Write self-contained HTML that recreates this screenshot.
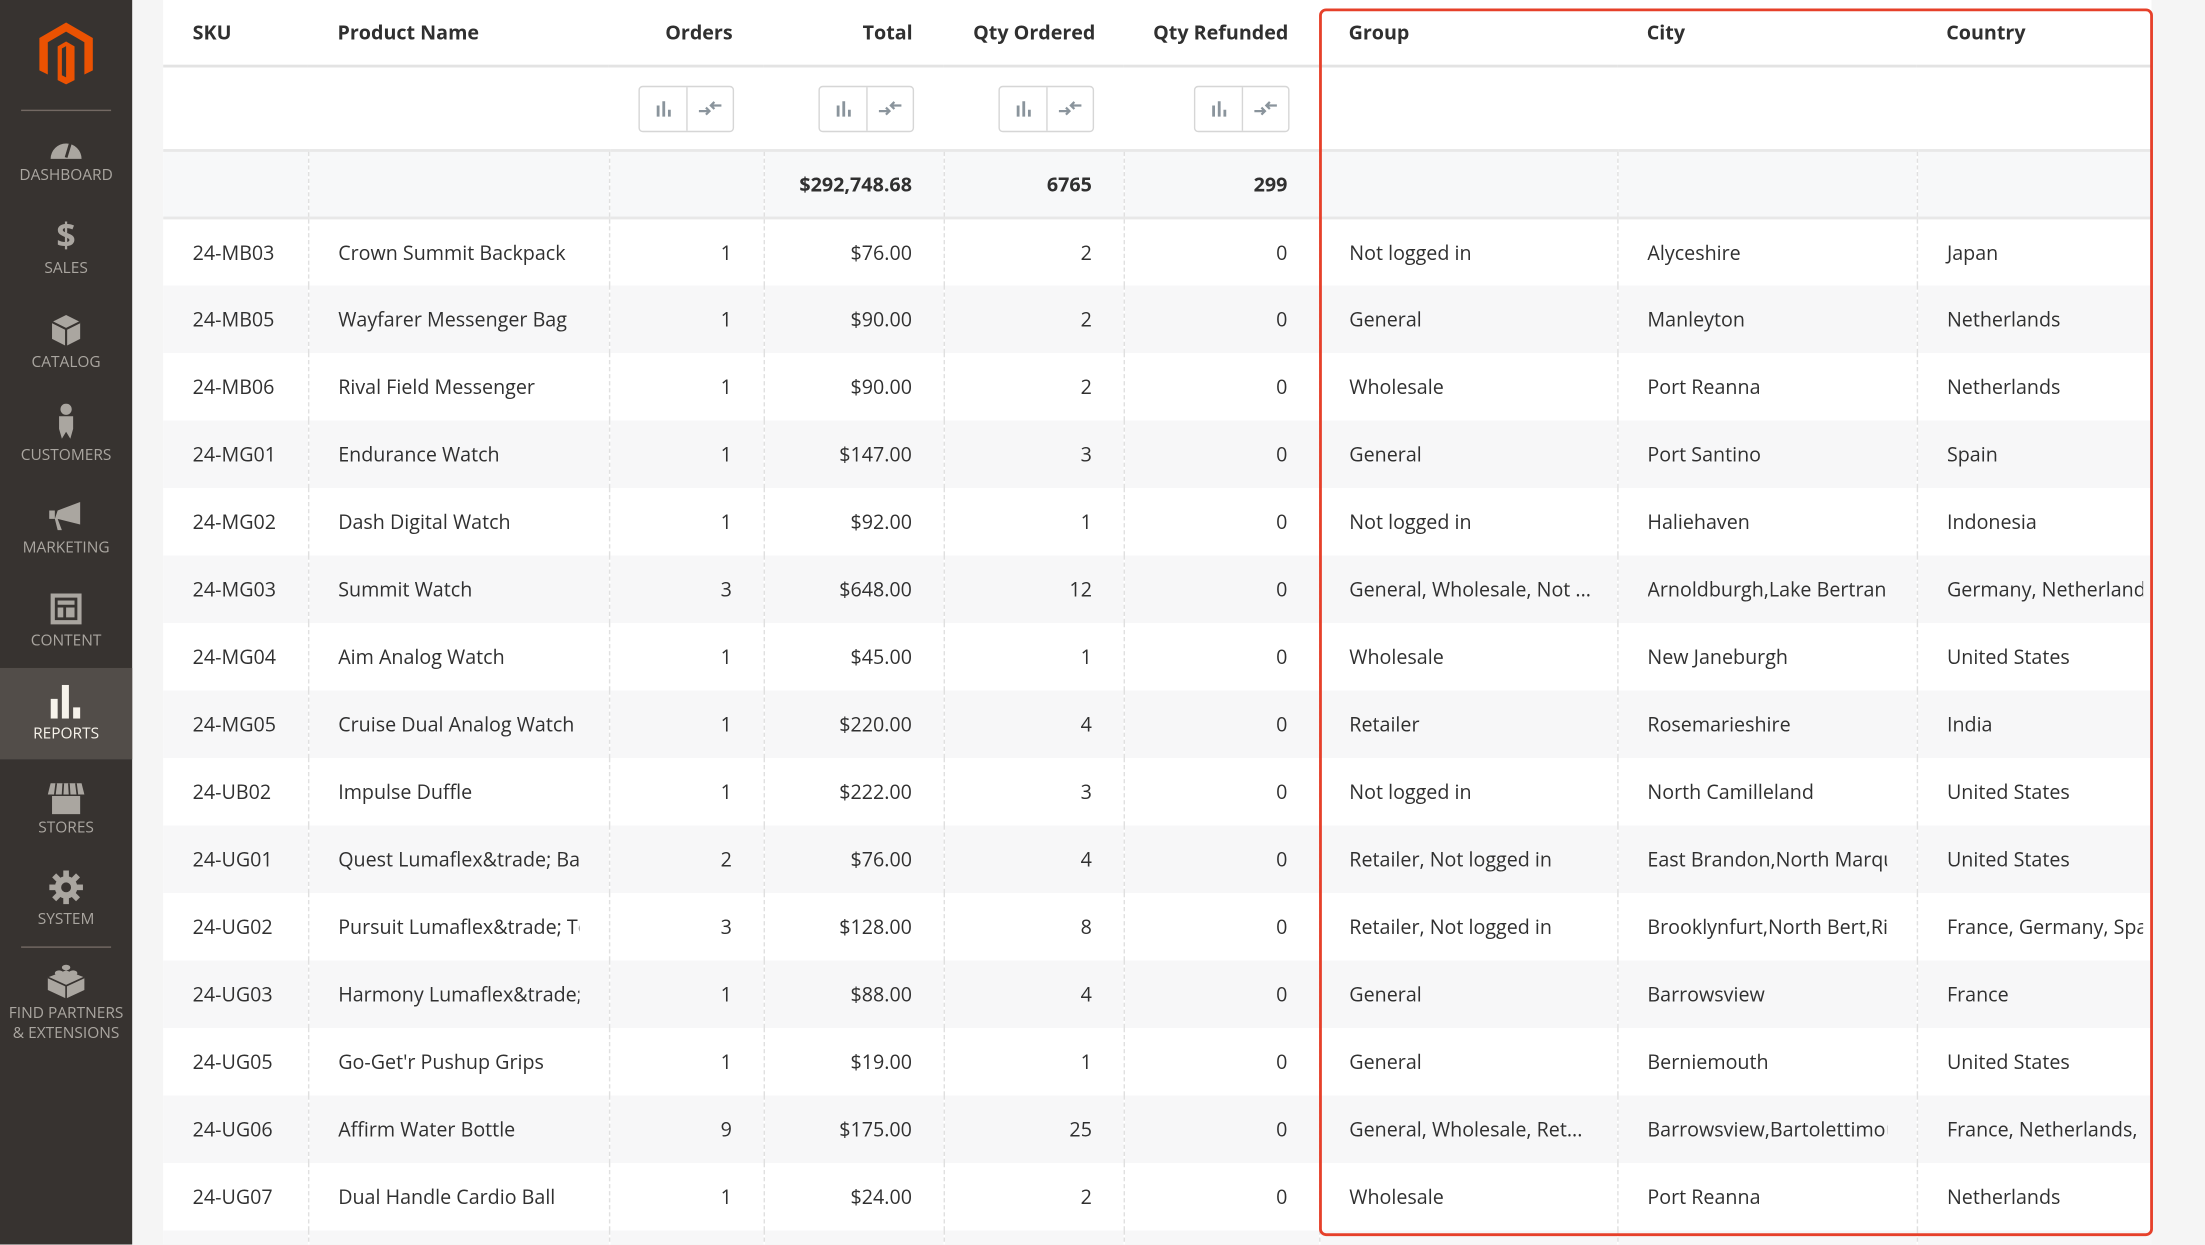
<!DOCTYPE html>
<html><head><meta charset="utf-8">
<style>
*{margin:0;padding:0;box-sizing:border-box}
html,body{width:2205px;height:1245px;overflow:hidden;background:#f5f5f5}
#w{position:absolute;left:0;top:0;width:1568px;height:885px;overflow:hidden;transform:scale(1.40625);transform-origin:0 0;font-family:"Open Sans","Liberation Sans",sans-serif;color:#303030}
#sb{position:absolute;left:0;top:0;width:94px;height:885px;background:#373330}
.it{position:absolute;left:0;width:94px;text-align:center;color:#aaa6a0;font-size:11px;line-height:14px}
.it svg{display:block;margin:0 auto}
.hr{position:absolute;left:15px;width:64px;height:1px;background:#736963}
#main{position:absolute;left:116px;top:0;width:1414px;height:885px;background:#fff;overflow:hidden}
table{border-collapse:collapse;table-layout:fixed;width:1414px;font-size:14px}
td,th{white-space:nowrap;overflow:hidden;padding:0 21px}
td .c{overflow:hidden;white-space:nowrap}
th{height:47px;font-weight:bold;text-align:left;border-bottom:2px solid #e3e3e3;padding-bottom:0}
.r{text-align:right;padding-right:22px}
tr.f td{height:60px;border-bottom:2px solid #e8e8e8}
tr.t td{height:48px;background:#f7f8f9;font-weight:bold;border-bottom:2px solid #e8e8e8;border-left:1px dashed #e0e0e0}
tr.t td:first-child{border-left:none}
tbody tr.d td{height:48px;border-left:1px dashed #e0e0e0;padding-top:1px}
tbody tr.d td:first-child{border-left:none}
tbody tr.d:nth-child(even) td{background:#f7f7f8}
.bp{display:inline-flex;border:1px solid #d6d6d6;border-radius:3px;height:33px;vertical-align:middle}
.bp span{width:33px;display:flex;align-items:center;justify-content:center}
.bp span+span{border-left:1px solid #d6d6d6}
#red{position:absolute;left:938px;top:6px;width:593px;height:873px;border:2px solid #e6402a;border-radius:5px}
</style></head><body><div id="w">
<div id="sb">
 <div class="it" style="top:15px"><svg width="40" height="46" viewBox="0 0 40 46"><path d="M20 1L39 12V35L33 38V15L20 7.5L7 15V38L1 35V12Z M14 18L20 14.5L26 18V42L20 45L14 42Z" fill="#eb5202"/><path d="M17 19.5L20 17.8V40L17 38.5Z" fill="#373330"/></svg></div>
 <div class="hr" style="top:78px"></div>
 <div class="it" style="top:96px"><svg width="24" height="18" viewBox="0 0 24 18"><path d="M1 17A11 11 0 0 1 23 17Z" fill="#aaa6a0"/><path d="M12 16L15 6" stroke="#373330" stroke-width="2"/></svg><div style="margin-top:4px">DASHBOARD</div></div>
 <div class="it" style="top:156px"><div style="font-size:24px;font-weight:bold;line-height:24px">$</div><div style="margin-top:4px">SALES</div></div>
 <div class="it" style="top:223px"><svg width="22" height="24" viewBox="0 0 22 24"><path d="M11 1L21 6V18L11 23L1 18V6Z" fill="#aaa6a0"/><path d="M1 6L11 11L21 6M11 11V23" stroke="#373330" stroke-width="1.5" fill="none"/></svg><div style="margin-top:4px">CATALOG</div></div>
 <div class="it" style="top:287px"><svg width="14" height="26" viewBox="0 0 14 26"><circle cx="7" cy="4" r="4" fill="#aaa6a0"/><path d="M2 9H12V18L10 25L7 20L4 25L2 18Z" fill="#aaa6a0"/></svg><div style="margin-top:4px">CUSTOMERS</div></div>
 <div class="it" style="top:357px"><svg width="32" height="22" viewBox="0 0 32 22"><path d="M4 6H8V12H4Z M10 6L26 0V16L10 12L13 20H10L8 12Z" fill="#aaa6a0"/></svg><div style="margin-top:4px">MARKETING</div></div>
 <div class="it" style="top:421px"><svg width="24" height="24" viewBox="0 0 24 24"><path d="M1 1H23V23H1Z M4 4V20H20V4Z M6 6H18V9H6Z M6 11H10V18H6Z M12 11H18V18H12Z" fill="#aaa6a0" fill-rule="evenodd"/></svg><div style="margin-top:4px">CONTENT</div></div>
 <div style="position:absolute;left:0;top:475px;width:94px;height:65px;background:#524d49"></div>
 <div class="it" style="top:487px;color:#f7f3eb"><svg width="22" height="24" viewBox="0 0 22 24"><path d="M0 10H5V24H0Z M8 0H13V24H8Z M16 16H21V24H16Z" fill="#f7f3eb"/></svg><div style="margin-top:4px">REPORTS</div></div>
 <div class="it" style="top:555px"><svg width="28" height="24" viewBox="0 0 28 24"><path d="M3 2H25L27 10H1Z" fill="#aaa6a0"/><path d="M4 11H24V24H4Z" fill="#aaa6a0"/><path d="M7 2L6 10M12 2L11.5 10M16 2L16.5 10M21 2L22 10" stroke="#373330" stroke-width="1.2"/></svg><div style="margin-top:3px">STORES</div></div>
 <div class="it" style="top:619px"><svg width="24" height="24" viewBox="0 0 24 24"><g fill="#aaa6a0"><circle cx="12" cy="12" r="8"/><rect x="10" y="0" width="4" height="24"/><rect x="0" y="10" width="24" height="4"/><rect x="10" y="0" width="4" height="24" transform="rotate(45 12 12)"/><rect x="10" y="0" width="4" height="24" transform="rotate(-45 12 12)"/></g><circle cx="12" cy="12" r="3.5" fill="#373330"/></svg><div style="margin-top:4px">SYSTEM</div></div>
 <div class="hr" style="top:673px"></div>
 <div class="it" style="top:684px"><svg width="28" height="26" viewBox="0 0 28 26"><path d="M14 6L27 11V20L14 26L1 20V11Z" fill="#aaa6a0"/><ellipse cx="9" cy="8" rx="3" ry="2" fill="#aaa6a0"/><ellipse cx="19" cy="8" rx="3" ry="2" fill="#aaa6a0"/><ellipse cx="14" cy="4" rx="3" ry="2" fill="#aaa6a0"/><path d="M1 11L14 17L27 11M14 17V26" stroke="#373330" stroke-width="1.2" fill="none"/></svg><div style="margin-top:4px">FIND PARTNERS<br>&amp; EXTENSIONS</div></div>
</div>
<div id="main">
<table>
<colgroup><col style="width:103px"><col style="width:214px"><col style="width:110px"><col style="width:128px"><col style="width:128px"><col style="width:139px"><col style="width:212px"><col style="width:213px"><col style="width:167px"></colgroup>
<thead><tr><th>SKU</th><th>Product Name</th><th class="r">Orders</th><th class="r">Total</th><th class="r">Qty Ordered</th><th class="r">Qty Refunded</th><th>Group</th><th>City</th><th>Country</th></tr></thead>
<tbody>
<tr class="f"><td></td><td></td>
<td class="r" style="padding-right:21px"><span class="bp"><span><svg width="12" height="12"><path d="M1 4h2v8H1zM5 1h2v11H5zM9 7h2v5H9z" fill="#8a949c"/></svg></span><span><svg width="18" height="12"><path d="M1 8h7M6 5.5L8.5 8L6 10.5M17 4h-7M12 1.5L9.5 4L12 6.5" stroke="#8a949c" stroke-width="1.6" fill="none"/></svg></span></span></td>
<td class="r" style="padding-right:21px"><span class="bp"><span><svg width="12" height="12"><path d="M1 4h2v8H1zM5 1h2v11H5zM9 7h2v5H9z" fill="#8a949c"/></svg></span><span><svg width="18" height="12"><path d="M1 8h7M6 5.5L8.5 8L6 10.5M17 4h-7M12 1.5L9.5 4L12 6.5" stroke="#8a949c" stroke-width="1.6" fill="none"/></svg></span></span></td>
<td class="r" style="padding-right:21px"><span class="bp"><span><svg width="12" height="12"><path d="M1 4h2v8H1zM5 1h2v11H5zM9 7h2v5H9z" fill="#8a949c"/></svg></span><span><svg width="18" height="12"><path d="M1 8h7M6 5.5L8.5 8L6 10.5M17 4h-7M12 1.5L9.5 4L12 6.5" stroke="#8a949c" stroke-width="1.6" fill="none"/></svg></span></span></td>
<td class="r" style="padding-right:21px"><span class="bp"><span><svg width="12" height="12"><path d="M1 4h2v8H1zM5 1h2v11H5zM9 7h2v5H9z" fill="#8a949c"/></svg></span><span><svg width="18" height="12"><path d="M1 8h7M6 5.5L8.5 8L6 10.5M17 4h-7M12 1.5L9.5 4L12 6.5" stroke="#8a949c" stroke-width="1.6" fill="none"/></svg></span></span></td>
<td></td><td></td><td></td></tr>
<tr class="t"><td></td><td></td><td></td><td class="r">$292,748.68</td><td class="r">6765</td><td class="r">299</td><td></td><td></td><td></td></tr>
<tr class="d"><td>24-MB03</td><td>Crown Summit Backpack</td><td class="r">1</td><td class="r">$76.00</td><td class="r">2</td><td class="r">0</td><td>Not logged in</td><td>Alyceshire</td><td>Japan</td></tr>
<tr class="d"><td>24-MB05</td><td>Wayfarer Messenger Bag</td><td class="r">1</td><td class="r">$90.00</td><td class="r">2</td><td class="r">0</td><td>General</td><td>Manleyton</td><td>Netherlands</td></tr>
<tr class="d"><td>24-MB06</td><td>Rival Field Messenger</td><td class="r">1</td><td class="r">$90.00</td><td class="r">2</td><td class="r">0</td><td>Wholesale</td><td>Port Reanna</td><td>Netherlands</td></tr>
<tr class="d"><td>24-MG01</td><td>Endurance Watch</td><td class="r">1</td><td class="r">$147.00</td><td class="r">3</td><td class="r">0</td><td>General</td><td>Port Santino</td><td>Spain</td></tr>
<tr class="d"><td>24-MG02</td><td>Dash Digital Watch</td><td class="r">1</td><td class="r">$92.00</td><td class="r">1</td><td class="r">0</td><td>Not logged in</td><td>Haliehaven</td><td>Indonesia</td></tr>
<tr class="d"><td>24-MG03</td><td>Summit Watch</td><td class="r">3</td><td class="r">$648.00</td><td class="r">12</td><td class="r">0</td><td>General, Wholesale, Not ...</td><td><div class="c">Arnoldburgh,Lake Bertrand</div></td><td style="padding-right:6px"><div class="c">Germany, Netherlands</div></td></tr>
<tr class="d"><td>24-MG04</td><td>Aim Analog Watch</td><td class="r">1</td><td class="r">$45.00</td><td class="r">1</td><td class="r">0</td><td>Wholesale</td><td>New Janeburgh</td><td>United States</td></tr>
<tr class="d"><td>24-MG05</td><td>Cruise Dual Analog Watch</td><td class="r">1</td><td class="r">$220.00</td><td class="r">4</td><td class="r">0</td><td>Retailer</td><td>Rosemarieshire</td><td>India</td></tr>
<tr class="d"><td>24-UB02</td><td>Impulse Duffle</td><td class="r">1</td><td class="r">$222.00</td><td class="r">3</td><td class="r">0</td><td>Not logged in</td><td>North Camilleland</td><td>United States</td></tr>
<tr class="d"><td>24-UG01</td><td><div class="c">Quest Lumaflex&amp;trade; Band</div></td><td class="r">2</td><td class="r">$76.00</td><td class="r">4</td><td class="r">0</td><td>Retailer, Not logged in</td><td><div class="c">East Brandon,North Marquis</div></td><td>United States</td></tr>
<tr class="d"><td>24-UG02</td><td><div class="c">Pursuit Lumaflex&amp;trade; Tone</div></td><td class="r">3</td><td class="r">$128.00</td><td class="r">8</td><td class="r">0</td><td>Retailer, Not logged in</td><td><div class="c">Brooklynfurt,North Bert,Rio</div></td><td style="padding-right:6px"><div class="c">France, Germany, Spain</div></td></tr>
<tr class="d"><td>24-UG03</td><td><div class="c">Harmony Lumaflex&amp;trade; Strength</div></td><td class="r">1</td><td class="r">$88.00</td><td class="r">4</td><td class="r">0</td><td>General</td><td>Barrowsview</td><td>France</td></tr>
<tr class="d"><td>24-UG05</td><td>Go-Get'r Pushup Grips</td><td class="r">1</td><td class="r">$19.00</td><td class="r">1</td><td class="r">0</td><td>General</td><td>Berniemouth</td><td>United States</td></tr>
<tr class="d"><td>24-UG06</td><td>Affirm Water Bottle</td><td class="r">9</td><td class="r">$175.00</td><td class="r">25</td><td class="r">0</td><td>General, Wholesale, Ret...</td><td><div class="c">Barrowsview,Bartolettimouth</div></td><td style="padding-right:6px"><div class="c">France, Netherlands, Spain</div></td></tr>
<tr class="d"><td>24-UG07</td><td>Dual Handle Cardio Ball</td><td class="r">1</td><td class="r">$24.00</td><td class="r">2</td><td class="r">0</td><td>Wholesale</td><td>Port Reanna</td><td>Netherlands</td></tr>
<tr class="d"><td></td><td></td><td></td><td></td><td></td><td></td><td></td><td></td><td></td></tr>
</tbody></table>
</div>
<div id="red"></div>
</div></body></html>
